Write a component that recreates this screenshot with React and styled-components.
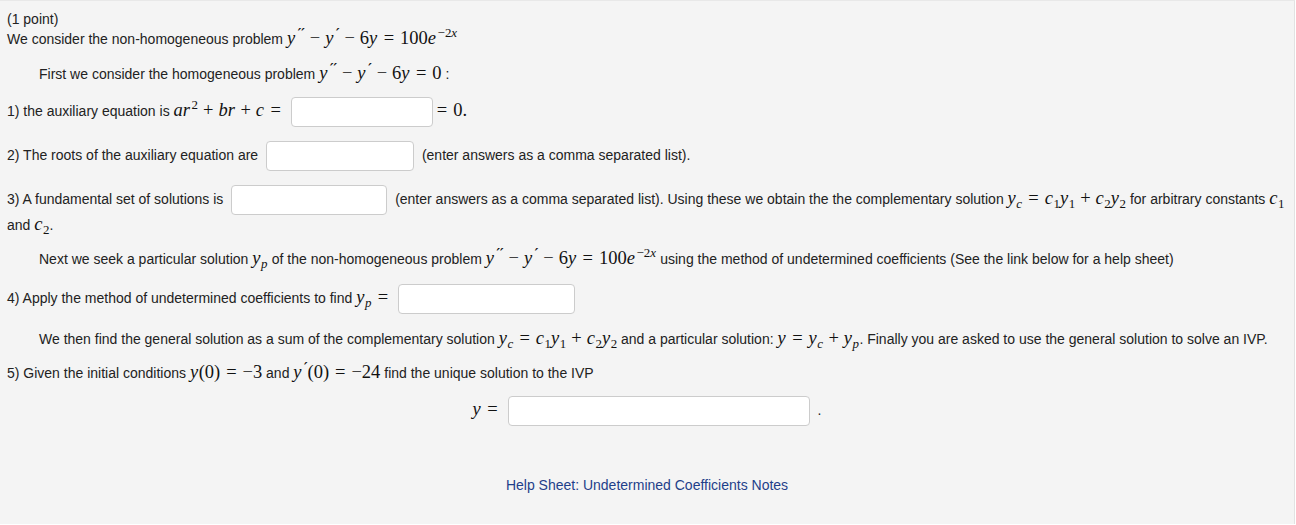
import React from "react";
import styled, { createGlobalStyle } from "styled-components";

const Global = createGlobalStyle`
  html, body { margin: 0; padding: 0; background: #ffffff; }
  body { font-family: "Liberation Sans", Arial, sans-serif; }
`;

const Panel = styled.div`
  width: 1280px;
  min-height: 515px;
  background: #f4f4f4;
  border-top: 1px solid #e8e8e8;
  border-right: 1px solid #e2e2e2;
  padding: 8px 7px 0 7px;
  font-size: 14px;
  line-height: 20px;
  color: #222;
`;

const Para = styled.div`
  margin-top: ${(p) => p.$mt || 0}px;
  padding-left: ${(p) => (p.$indent ? 32 : 0)}px;
  text-align: ${(p) => (p.$center ? "center" : "left")};
`;

const M = styled.span`
  font-family: "Liberation Serif", "DejaVu Serif", serif;
  font-size: 18.5px;
  line-height: 1;
  white-space: nowrap;
  color: #111;
`;

const I = styled.span`
  font-style: italic;
  margin-right: 0.03em;
`;

const Op = styled.span`
  margin: 0 ${(p) => (p.$rel ? "0.32em" : "0.27em")};
  margin-left: ${(p) => (p.$tight ? "0" : undefined)};
`;

const Sup = styled.span`
  font-size: 70%;
  vertical-align: 0.55em;
  line-height: 0;
  margin-left: 1px;
`;

const Sub = styled.span`
  font-size: 70%;
  vertical-align: -0.3em;
  line-height: 0;
`;

const Prime = styled.span`
  font-family: "DejaVu Sans", sans-serif;
  font-style: italic;
  font-weight: bold;
  font-size: 72%;
  vertical-align: 0.45em;
  line-height: 0;
  margin-left: 2px;
`;

const Answer = styled.input`
  box-sizing: border-box;
  width: ${(p) => p.$w}px;
  height: 30px;
  margin: 0 4px;
  padding: 4px 6px;
  border: 1px solid #cccccc;
  border-radius: 4px;
  background: #ffffff;
  vertical-align: middle;
  font-family: "Liberation Sans", Arial, sans-serif;
  font-size: 14px;
  outline: none;
`;

const HelpLink = styled.a`
  color: #1f3f8a;
  text-decoration: none;
`;

const Yv = () => <I>y</I>;
const Minus = () => <Op>−</Op>;
const Eq = ({ tight }) => (
  <Op $rel $tight={tight}>
    =
  </Op>
);
const Plus = () => <Op>+</Op>;

const ODE = ({ rhs }) => (
  <M>
    <Yv />
    <Prime>′′</Prime>
    <Minus />
    <Yv />
    <Prime>′</Prime>
    <Minus />
    6<Yv />
    <Eq />
    {rhs === "0" ? (
      "0"
    ) : (
      <>
        100<I>e</I>
        <Sup>
          −2<I>x</I>
        </Sup>
      </>
    )}
  </M>
);

const YSub = ({ s }) => (
  <>
    <I>y</I>
    <Sub>{s}</Sub>
  </>
);
const CSub = ({ s }) => (
  <>
    <I>c</I>
    <Sub>{s}</Sub>
  </>
);

const Comp = () => (
  <M>
    <YSub s={<I>c</I>} />
    <Eq />
    <CSub s="1" />
    <YSub s="1" />
    <Plus />
    <CSub s="2" />
    <YSub s="2" />
  </M>
);

export default function App() {
  return (
    <>
      <Global />
      <Panel>
        <Para>(1 point)</Para>
        <Para>
          We consider the non-homogeneous problem <ODE />
        </Para>
        <Para $mt={15} $indent>
          First we consider the homogeneous problem <ODE rhs="0" /> :
        </Para>
        <Para $mt={13}>
          1) the auxiliary equation is{" "}
          <M>
            <I>ar</I>
            <Sup>2</Sup>
            <Plus />
            <I>br</I>
            <Plus />
            <I>c</I>
            <Eq />
          </M>
          <Answer $w={142} />
          <M>
            <Eq tight />
            0.
          </M>
        </Para>
        <Para $mt={14}>
          2) The roots of the auxiliary equation are <Answer $w={148} /> (enter answers as a comma separated list).
        </Para>
        <Para $mt={14}>
          3) A fundamental set of solutions is <Answer $w={156} /> (enter answers as a comma separated list). Using these
          we obtain the the complementary solution <Comp /> for arbitrary constants{" "}
          <M>
            <CSub s="1" />
          </M>{" "}
          and{" "}
          <M>
            <CSub s="2" />
          </M>
          .
        </Para>
        <Para $mt={14} $indent>
          Next we seek a particular solution{" "}
          <M>
            <YSub s={<I>p</I>} />
          </M>{" "}
          of the non-homogeneous problem <ODE /> using the method of undetermined coefficients (See the link below for a
          help sheet)
        </Para>
        <Para $mt={15}>
          4) Apply the method of undetermined coefficients to find{" "}
          <M>
            <YSub s={<I>p</I>} />
            <Eq />
          </M>
          <Answer $w={177} />
        </Para>
        <Para $mt={15} $indent>
          We then find the general solution as a sum of the complementary solution <Comp /> and a particular solution:{" "}
          <M>
            <Yv />
            <Eq />
            <YSub s={<I>c</I>} />
            <Plus />
            <YSub s={<I>p</I>} />
          </M>
          . Finally you are asked to use the general solution to solve an IVP.
        </Para>
        <Para $mt={14}>
          5) Given the initial conditions{" "}
          <M>
            <Yv />
            (0)
            <Eq />
            −3
          </M>{" "}
          and{" "}
          <M>
            <Yv />
            <Prime>′</Prime>
            (0)
            <Eq />
            −24
          </M>{" "}
          find the unique solution to the IVP
        </Para>
        <Para $mt={13} $center>
          <M>
            <Yv />
            <Eq />
          </M>
          <Answer $w={302} /> .
        </Para>
        <Para $mt={49} $center>
          <HelpLink href="#">Help Sheet: Undetermined Coefficients Notes</HelpLink>
        </Para>
      </Panel>
    </>
  );
}
